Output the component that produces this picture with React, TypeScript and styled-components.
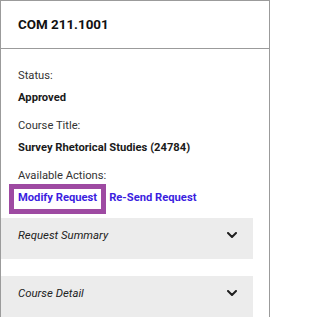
import { FC } from 'react'
import styled, { createGlobalStyle } from 'styled-components'

const GlobalStyle = createGlobalStyle`
  body {
    margin: 0;
    background: #fff;
    font-family: Roboto, 'Liberation Sans', Arial, sans-serif;
  }
`

const fields = [
  { label: 'Status:', value: 'Approved' },
  { label: 'Course Title:', value: 'Survey Rhetorical Studies (24784)' },
]

const panels = ['Request Summary', 'Course Detail']

const Chevron: FC = () => (
  <svg width="10" height="6" viewBox="0 0 10 6" fill="none">
    <polyline points="1,1 5,5 9,1" stroke="#1f1f1f" strokeWidth="2" strokeLinecap="round" strokeLinejoin="round" />
  </svg>
)

const App: FC = () => {
  return (
    <>
      <GlobalStyle />
      <Card>
        <Header>COM 211.1001</Header>
        <Body>
          {fields.map((f) => (
            <Field key={f.label}>
              <Label>{f.label}</Label>
              <Value>{f.value}</Value>
            </Field>
          ))}
          <Label>Available Actions:</Label>
          <Actions>
            <ActionLink href="#" $focused>
              Modify Request
            </ActionLink>
            <ActionLink href="#">Re-Send Request</ActionLink>
          </Actions>
        </Body>
        {panels.map((p) => (
          <Panel key={p}>
            <PanelTitle>{p}</PanelTitle>
            <Chevron />
          </Panel>
        ))}
      </Card>
    </>
  )
}

const Card = styled.div`
  width: 270px;
  min-height: 340px;
  box-sizing: border-box;
  border: 1px solid #9b9b9b;
  border-bottom: none;
`

const Header = styled.div`
  height: 47px;
  display: flex;
  align-items: center;
  padding: 0 17px;
  border-bottom: 1px solid #9b9b9b;
  font-size: 13.4px;
  font-weight: 700;
  color: #111;
`

const Body = styled.div`
  padding: 20px 0 0 17px;
`

const Field = styled.div`
  margin-bottom: 14px;
`

const Label = styled.div`
  font-size: 11.2px;
  line-height: 14px;
  color: #333;
  margin-bottom: 8px;
`

const Value = styled.div`
  font-size: 11.2px;
  line-height: 14px;
  font-weight: 700;
  color: #1a1a1a;
`

const Actions = styled.div`
  display: flex;
  gap: 8px;
  margin-left: -2px;
`

const ActionLink = styled.a<{ $focused?: boolean }>`
  display: inline-block;
  padding: 0 2px 2px;
  font-size: 11.2px;
  line-height: 14px;
  font-weight: 700;
  color: #3b1ee0;
  text-decoration: none;
  outline: ${(p) => (p.$focused ? '5px solid #9e4aa2' : 'none')};
  outline-offset: 2px;
`

const Panel = styled.div`
  height: 41px;
  box-sizing: border-box;
  margin: 11px 16px 0 0;
  padding: 10px 16px 17px 17px;
  display: flex;
  align-items: center;
  justify-content: space-between;
  background: #ececec;

  & + & {
    margin-top: 17px;
  }
`

const PanelTitle = styled.span`
  font-size: 11.4px;
  line-height: 14px;
  font-style: italic;
  color: #222;
`

export default App
